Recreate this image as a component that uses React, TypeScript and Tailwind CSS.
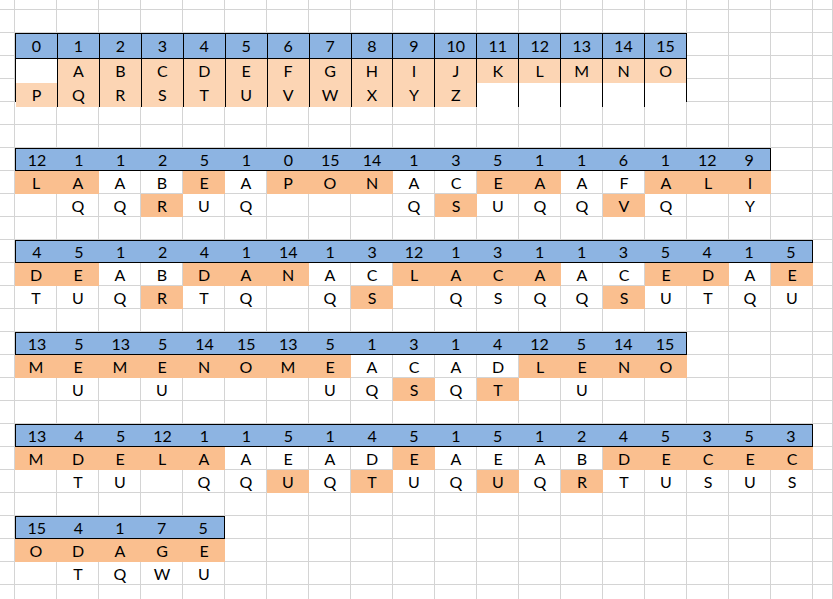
import React from 'react';

const LETTERS = 'ABCDEFGHIJKLMNOPQRSTUVWXYZ';

// value n -> letter n on the first line, letter n+16 below (if it exists)
const top = (n: number) => (n === 0 ? 'P' : LETTERS[n - 1]);
const bottom = (n: number) => (n === 0 ? '' : n + 16 <= 26 ? LETTERS[n + 15] : '');

type Block = {
  row: string;
  span: string;
  head: number[];
  topFill: string;
  bottomFill: string;
};

const blocks: Block[] = [
  {
    row: 'row-start-8',
    span: 'col-span-18',
    head: [12, 1, 1, 2, 5, 1, 0, 15, 14, 1, 3, 5, 1, 1, 6, 1, 12, 9],
    topFill: 'oo..o.ooo..oo..ooo',
    bottomFill: '...o......o...o...',
  },
  {
    row: 'row-start-12',
    span: 'col-span-19',
    head: [4, 5, 1, 2, 4, 1, 14, 1, 3, 12, 1, 3, 1, 1, 3, 5, 4, 1, 5],
    topFill: 'oo..ooo..oooo..oo.o',
    bottomFill: '...o....o.....o....',
  },
  {
    row: 'row-start-16',
    span: 'col-span-16',
    head: [13, 5, 13, 5, 14, 15, 13, 5, 1, 3, 1, 4, 12, 5, 14, 15],
    topFill: 'oooooooo....oooo',
    bottomFill: '.........o.o....',
  },
  {
    row: 'row-start-20',
    span: 'col-span-19',
    head: [13, 4, 5, 12, 1, 1, 5, 1, 4, 5, 1, 5, 1, 2, 4, 5, 3, 5, 3],
    topFill: 'ooooo....o....ooooo',
    bottomFill: '......o.o..o.o.....',
  },
  {
    row: 'row-start-24',
    span: 'col-span-5',
    head: [15, 4, 1, 7, 5],
    topFill: 'ooooo',
    bottomFill: '.....',
  },
];

const KeyTable: React.FC = () => {
  const cols = Array.from({ length: 16 }, (_, i) => i);
  const row2 = cols.map(i => (i === 0 ? '' : LETTERS[i - 1]));
  const row3 = cols.map(i => (i + 15 < 26 ? LETTERS[i + 15] : ''));
  return (
    <div className="col-start-2 col-span-16 row-start-3 row-span-3 z-10 flex flex-col border border-black">
      <div className="flex flex-1 bg-[#8db4e2] border-b border-black">
        {cols.map(i => (
          <div key={i} className={`flex-1 flex items-center justify-center ${i < 15 ? 'border-r border-black' : ''}`}>
            {i}
          </div>
        ))}
      </div>
      <div className="flex flex-1">
        {row2.map((l, i) => (
          <div
            key={i}
            className={`flex-1 flex items-center justify-center ${l ? 'bg-[#fcd5b4]' : 'bg-white'} ${i < 15 ? 'border-r border-black' : ''}`}
          >
            {l}
          </div>
        ))}
      </div>
      <div className="flex flex-1">
        {row3.map((l, i) => (
          <div
            key={i}
            className={`flex-1 flex items-center justify-center ${l ? 'bg-[#fcd5b4]' : 'bg-white'} ${i < 15 ? 'border-r border-black' : ''}`}
          >
            {l}
          </div>
        ))}
      </div>
    </div>
  );
};

const CodeTable: React.FC<{ block: Block }> = ({ block }) => (
  <div className={`col-start-2 ${block.span} ${block.row} row-span-3 z-10 flex flex-col`}>
    <div className="flex h-[23px] bg-[#8db4e2] border border-black">
      {block.head.map((n, i) => (
        <div key={i} className="flex-1 flex items-center justify-center">
          {n}
        </div>
      ))}
    </div>
    <div className="flex h-[23px]">
      {block.head.map((n, i) => (
        <div
          key={i}
          className={`flex-1 flex items-center justify-center ${block.topFill[i] === 'o' ? 'bg-[#fabf8f]' : ''}`}
        >
          {top(n)}
        </div>
      ))}
    </div>
    <div className="flex h-[23px]">
      {block.head.map((n, i) => (
        <div
          key={i}
          className={`flex-1 flex items-center justify-center ${block.bottomFill[i] === 'o' ? 'bg-[#fabf8f]' : ''}`}
        >
          {bottom(n)}
        </div>
      ))}
    </div>
  </div>
);

const App: React.FC = () => {
  const gridCells = Array.from({ length: 21 * 27 }, (_, i) => i);
  return (
    <div className="w-[833px] h-[599px] overflow-hidden bg-white text-black text-[16px] font-['Lato',sans-serif]">
      <div className="grid grid-cols-[15px_repeat(19,42px)_1fr] grid-rows-[10px_repeat(26,23px)]">
        {gridCells.map(i => (
          <div
            key={i}
            className="border-r border-b border-[#d4d4d4]"
            style={{ gridColumnStart: (i % 21) + 1, gridRowStart: Math.floor(i / 21) + 1 }}
          />
        ))}
        <KeyTable />
        {blocks.map((b, i) => (
          <CodeTable key={i} block={b} />
        ))}
      </div>
    </div>
  );
};

export default App;
